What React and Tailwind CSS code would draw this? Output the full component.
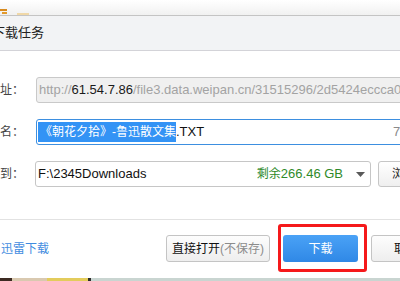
export default function App() {
  return (
    <div
      className="relative w-[400px] h-[281px] overflow-hidden bg-white text-[12px] text-[#333]"
      style={{ fontFamily: '"Liberation Sans", "Noto Sans CJK SC", sans-serif' }}
    >
      {/* strip of the page behind the dialog */}
      <div className="relative h-[15px] bg-gradient-to-b from-white to-[#f1f1f1]">
        <div className="absolute left-0 top-[9px] w-[7px] h-[2px] bg-[#d88a1e]" />
        <div className="absolute left-[2px] top-[12px] w-[5px] h-[2px] bg-[#e29a2e]" />
        <div className="absolute left-[17px] top-[13px] w-[12px] h-[2px] bg-[#f0d8a8]" />
      </div>

      {/* title bar */}
      <div className="h-[36px] flex items-center border-t border-[#c4c4c4] border-b border-b-[#d3d3d8] bg-[#f2f3f5]">
        <span className="-ml-[8px] text-[13px] text-[#222] whitespace-nowrap">下载任务</span>
      </div>

      <div className="flex flex-col gap-[16px] pt-[26px]">
        {/* address */}
        <div className="flex items-center">
          <div className="w-[24px] shrink-0 flex justify-end mr-[12px]">
            <span className="whitespace-nowrap text-[#444]">下载地址：</span>
          </div>
          <div className="w-[430px] shrink-0 h-[26px] flex items-center pl-[2px] border border-[#c9c9c9] rounded-[3px] bg-[#f0f0f0] text-[13px] text-[#a3a3a3] whitespace-nowrap">
            http://<span className="text-[#1a1a1a]">61.54.7.86</span>/file3.data.weipan.cn/31515296/2d5424eccca0f8b1
          </div>
        </div>

        {/* file name */}
        <div className="flex items-center">
          <div className="w-[24px] shrink-0 flex justify-end mr-[12px]">
            <span className="whitespace-nowrap text-[#444]">文件名：</span>
          </div>
          <div className="w-[430px] shrink-0 h-[26px] flex items-center pl-[1px] border border-[#3d8fe0] rounded-[3px] bg-white whitespace-nowrap">
            <div className="w-[355px] shrink-0 flex items-center">
              <span className="bg-[#3393f5] text-white leading-[20px] pl-[2px]">《朝花夕拾》-鲁迅散文集</span>
              <span className="text-[13px] text-[#111]">.TXT</span>
            </div>
            <span className="text-[13px] text-[#8a8a8a]">7.92 KB</span>
          </div>
        </div>

        {/* save to */}
        <div className="flex items-center">
          <div className="w-[24px] shrink-0 flex justify-end mr-[11px]">
            <span className="whitespace-nowrap text-[#444]">保存到：</span>
          </div>
          <div className="w-[336px] shrink-0 h-[26px] flex items-center pl-[2px] border border-[#c6c6c6] rounded-[3px] bg-white whitespace-nowrap">
            <span className="text-[13px] text-[#111]">F:\2345Downloads</span>
            <span className="ml-auto text-[#2f8a2a]">
              剩余<span className="text-[13px]">266.46 GB</span>
            </span>
            <svg className="ml-[13px] mr-[5px]" width="9" height="5" viewBox="0 0 9 5">
              <path d="M0 0 H9 L4.5 5 Z" fill="#5a5a5a" />
            </svg>
          </div>
          <button className="ml-[7px] w-[62px] shrink-0 h-[26px] border border-[#c6c6c6] rounded-[3px] bg-gradient-to-b from-white to-[#efefef] text-[#222] whitespace-nowrap text-left pl-[13px]">
            浏览
          </button>
        </div>
      </div>

      <div className="mt-[32px] h-px bg-[#e2e2e2]" />

      {/* footer */}
      <div className="mt-[15px] flex items-center h-[27px]">
        <div className="w-[166px] shrink-0 pl-[1px] text-[#3f8be0] whitespace-nowrap">迅雷下载</div>
        <button className="w-[104px] shrink-0 h-[27px] border border-[#c4c4c4] rounded-[3px] bg-gradient-to-b from-[#fdfdfd] to-[#eeeeee] text-[#111] whitespace-nowrap">
          直接打开<span className="text-[#8c8c8c]">(不保存)</span>
        </button>
        <button className="ml-[13px] w-[75px] shrink-0 h-[27px] rounded-[3px] bg-gradient-to-b from-[#4aa2f6] to-[#2f88e6] text-white">
          下载
        </button>
        <button className="ml-[13px] w-[75px] shrink-0 h-[27px] border border-[#c4c4c4] rounded-[3px] bg-gradient-to-b from-[#fdfdfd] to-[#eeeeee] text-[#111] text-left pl-[22px] whitespace-nowrap">
          取消
        </button>
      </div>

      {/* highlight annotation */}
      <div className="absolute left-[278px] top-[224px] w-[89px] h-[48px] border-[3px] border-[#f5191b] rounded-[3px]" />

      {/* picture behind the dialog */}
      <div className="absolute left-0 top-[278px] w-[400px] h-[3px] flex">
        <div className="w-[12px] bg-[#3c2a22]" />
        <div className="w-[35px] bg-[#d9c9b0]" />
        <div className="w-[41px] bg-[#e3cc5c]" />
        <div className="w-[3px] bg-[#2b2b2b]" />
        <div className="flex-1 bg-[#c9d5d1]" />
      </div>
    </div>
  );
}
